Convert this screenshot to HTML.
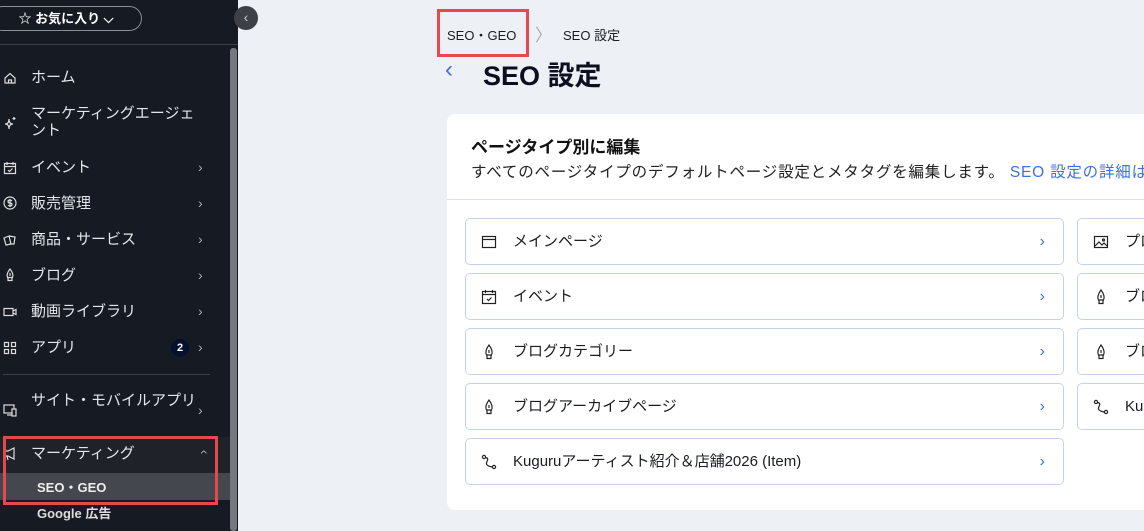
<!DOCTYPE html>
<html><head><meta charset="utf-8"><style>
*{box-sizing:border-box;margin:0;padding:0}
body{width:1144px;height:531px;overflow:hidden;background:#edf0f5;font-family:"Liberation Sans","Noto Sans CJK JP",sans-serif;position:relative}
.sb{position:absolute;left:0;top:0;width:238px;height:531px;background:#161a22;color:#e6e8ec}
.fav{position:absolute;left:-10px;top:6px;width:152px;height:25px;border:1px solid #8a8d93;border-radius:13px;color:#fff;font-size:13px;font-weight:bold;text-align:center;line-height:23px}
.hr{position:absolute;left:0;top:44px;width:238px;height:1px;background:#3c3f46}
.scroll{position:absolute;left:230px;top:48px;width:7px;height:483px;background:#75787e;border-radius:3px}
.it{position:absolute;left:31px;font-size:15px;color:#e4e6ea;line-height:17px;width:165px}
.ic{position:absolute;left:3px;width:14px;height:14px}
.ch{position:absolute;left:198px;font-size:14px;color:#aaa}
.card{position:absolute;left:447px;top:114px;width:720px;height:396px;background:#fff;border-radius:8px}
.row{position:absolute;height:47px;border:1px solid #c5d3ea;border-radius:5px;background:#fff;font-size:15px;color:#1a1c22;line-height:45px}
.row .t{position:absolute;left:47px}
.row .a{position:absolute;right:18px;color:#3b72e0;font-size:16px}
.row svg{position:absolute;left:15px;top:15px}
.red{position:absolute;border:3px solid #e5484d}
</style></head><body>
<div class="sb">
<div class="fav">☆ お気に入り ⌵</div>
<div class="hr"></div>
<div class="scroll"></div>
<svg class="ic" style="top:71px" viewBox="0 0 14 14" fill="none" stroke="#ddd" stroke-width="1.2"><path d="M2 7L7 2.5 12 7V12H2Z M5.5 12V9h3v3"/></svg>
<div class="it" style="top:69px">ホーム</div>
<svg class="ic" style="top:116px" viewBox="0 0 14 14" fill="none" stroke="#ddd" stroke-width="1.2"><path d="M6 3Q6 8 2 8Q6 8 6 13Q6 8 10 8Q6 8 6 3Z M11 1v3M9.5 2.5h3"/></svg>
<div class="it" style="top:105px;width:172px">マーケティングエージェント</div>
<svg class="ic" style="top:161px" viewBox="0 0 14 14" fill="none" stroke="#ddd" stroke-width="1.2"><rect x="1.5" y="2.5" width="11" height="10"/><path d="M1.5 5.5h11M4 1v3M10 1v3M5 9l1.5 1.5 3-3"/></svg>
<div class="it" style="top:159px">イベント</div><div class="ch" style="top:159px">›</div>
<svg class="ic" style="top:196px" viewBox="0 0 14 14" fill="none" stroke="#ddd" stroke-width="1.2"><circle cx="7" cy="7" r="6"/><path d="M9 5Q8 4 7 4Q5 4 5 5.5Q5 7 7 7Q9 7 9 8.5Q9 10 7 10Q6 10 5 9M7 3v8"/></svg>
<div class="it" style="top:195px">販売管理</div><div class="ch" style="top:195px">›</div>
<svg class="ic" style="top:233px" viewBox="0 0 14 14" fill="none" stroke="#ddd" stroke-width="1.2"><path d="M1 5l5-2 2 8-5 1Z M6 3l6 1-1 7-3 0"/></svg>
<div class="it" style="top:231px">商品・サービス</div><div class="ch" style="top:231px">›</div>
<svg class="ic" style="top:268px" viewBox="0 0 14 14" fill="none" stroke="#ddd" stroke-width="1.2"><path d="M7 1Q3 6 4.5 9.5H9.5Q11 6 7 1Z M5 9.5v3h4v-3M7 5v3"/></svg>
<div class="it" style="top:267px">ブログ</div><div class="ch" style="top:267px">›</div>
<svg class="ic" style="top:305px" viewBox="0 0 14 14" fill="none" stroke="#ddd" stroke-width="1.2"><rect x="1" y="3.5" width="9" height="7"/><path d="M10 6l3-1.5v5L10 8"/></svg>
<div class="it" style="top:303px">動画ライブラリ</div><div class="ch" style="top:303px">›</div>
<svg class="ic" style="top:341px" viewBox="0 0 14 14" fill="none" stroke="#ddd" stroke-width="1.2"><rect x="1.5" y="1.5" width="4" height="4"/><rect x="1.5" y="8.5" width="4" height="4"/><rect x="8.5" y="8.5" width="4" height="4"/><rect x="8.5" y="1.5" width="4" height="4"/></svg>
<div class="it" style="top:339px">アプリ</div>
<div style="position:absolute;left:171px;top:339px;width:18px;height:18px;border-radius:9px;background:#05112e;color:#fff;font-size:11px;font-weight:bold;text-align:center;line-height:18px">2</div>
<div class="ch" style="top:339px">›</div>
<div style="position:absolute;left:3px;top:374px;width:207px;height:1px;background:#3c3f46"></div>
<svg class="ic" style="top:403px" viewBox="0 0 14 14" fill="none" stroke="#ddd" stroke-width="1.2"><rect x="1" y="2" width="10" height="8"/><path d="M4 12h5"/><rect x="9" y="6" width="4" height="7" fill="#161a22"/></svg>
<div class="it" style="top:392px">サイト・モバイルアプリ</div><div class="ch" style="top:402px">›</div>
<div style="position:absolute;left:0;top:437px;width:230px;height:36px;background:#1f2229"></div>
<div style="position:absolute;left:0;top:473px;width:230px;height:27px;background:#44474e"></div>
<svg class="ic" style="top:447px" viewBox="0 0 14 14" fill="none" stroke="#ddd" stroke-width="1.2"><path d="M2 4h3l6-3v11L5 9H2Z M4 9l1 4"/></svg>
<div class="it" style="top:445px">マーケティング</div><div class="ch" style="top:444px;transform:rotate(-90deg);left:200px">›</div>
<div class="it" style="top:479px;left:37px;font-size:13px;font-weight:bold;color:#eee">SEO・GEO</div>
<div class="it" style="top:505px;left:37px;font-size:13px;font-weight:bold;color:#ddd">Google 広告</div>
<div class="red" style="left:3px;top:436px;width:215px;height:69px"></div>
</div>
<div style="position:absolute;left:234px;top:6px;width:24px;height:24px;border-radius:12px;background:#3d4047;color:#ccc;font-size:14px;text-align:center;line-height:22px">‹</div>
<div style="position:absolute;left:447px;top:25px;font-size:13px;color:#1a1c22">SEO・GEO</div>
<div style="position:absolute;left:535px;top:21px;font-size:17px;color:#aaa">〉</div>
<div style="position:absolute;left:563px;top:25px;font-size:13px;color:#1a1c22">SEO 設定</div>
<div class="red" style="left:437px;top:9px;width:92px;height:48px"></div>
<div style="position:absolute;left:445px;top:56px;font-size:24px;color:#3b72e0">‹</div>
<div style="position:absolute;left:483px;top:54px;font-size:27px;font-weight:bold;color:#0b0f1f">SEO 設定</div>
<div class="card">
<div style="position:absolute;left:24px;top:19px;font-size:17px;font-weight:bold;color:#111">ページタイプ別に編集</div>
<div style="position:absolute;left:24px;top:46px;font-size:15.5px;letter-spacing:0.8px;color:#222;white-space:nowrap">すべてのページタイプのデフォルトページ設定とメタタグを編集します。 <span style="color:#3b72e0">SEO 設定の詳細はこちら</span></div>
<div style="position:absolute;left:0;top:85px;width:720px;height:1px;background:#dfe2e8"></div>
</div>
<div class="row" style="left:465px;top:218px;width:599px"><svg width="16" height="16" viewBox="0 0 16 16" fill="none" stroke="#222" stroke-width="1.2"><rect x="1.5" y="2.5" width="13" height="11"/><path d="M1.5 5.5h13"/></svg><span class="t">メインページ</span><span class="a">›</span></div>
<div class="row" style="left:465px;top:273px;width:599px"><svg width="16" height="16" viewBox="0 0 16 16" fill="none" stroke="#222" stroke-width="1.2"><rect x="1.5" y="2.5" width="13" height="12"/><path d="M1.5 5.5h13M4.5 1v3M11.5 1v3M6 10l1.5 1.5 3-3"/></svg><span class="t">イベント</span><span class="a">›</span></div>
<div class="row" style="left:465px;top:328px;width:599px"><svg width="16" height="16" viewBox="0 0 16 16" fill="none" stroke="#222" stroke-width="1.2"><path d="M8 1Q3.5 7 5.5 11H10.5Q12.5 7 8 1Z M6 11v3.5h4V11M8 6v3"/></svg><span class="t">ブログカテゴリー</span><span class="a">›</span></div>
<div class="row" style="left:465px;top:383px;width:599px"><svg width="16" height="16" viewBox="0 0 16 16" fill="none" stroke="#222" stroke-width="1.2"><path d="M8 1Q3.5 7 5.5 11H10.5Q12.5 7 8 1Z M6 11v3.5h4V11M8 6v3"/></svg><span class="t">ブログアーカイブページ</span><span class="a">›</span></div>
<div class="row" style="left:465px;top:438px;width:599px"><svg width="16" height="16" viewBox="0 0 16 16" fill="none" stroke="#222" stroke-width="1.2"><circle cx="3" cy="3" r="1.6"/><circle cx="13" cy="13" r="1.6"/><path d="M4.5 3.5Q8 4 6 7.5Q4 11 9 12.5L11.5 13"/></svg><span class="t">Kuguruアーティスト紹介＆店舗2026 (Item)</span><span class="a">›</span></div>
<div class="row" style="left:1077px;top:218px;width:120px"><svg width="16" height="16" viewBox="0 0 16 16" fill="none" stroke="#222" stroke-width="1.2"><rect x="1.5" y="2.5" width="13" height="11"/><path d="M2 12l4-4 3 3 2-2 3 3"/><circle cx="10.5" cy="6" r="1"/></svg><span class="t">プロ</span></div>
<div class="row" style="left:1077px;top:273px;width:120px"><svg width="16" height="16" viewBox="0 0 16 16" fill="none" stroke="#222" stroke-width="1.2"><path d="M8 1Q3.5 7 5.5 11H10.5Q12.5 7 8 1Z M6 11v3.5h4V11M8 6v3"/></svg><span class="t">ブロ</span></div>
<div class="row" style="left:1077px;top:328px;width:120px"><svg width="16" height="16" viewBox="0 0 16 16" fill="none" stroke="#222" stroke-width="1.2"><path d="M8 1Q3.5 7 5.5 11H10.5Q12.5 7 8 1Z M6 11v3.5h4V11M8 6v3"/></svg><span class="t">ブロ</span></div>
<div class="row" style="left:1077px;top:383px;width:120px"><svg width="16" height="16" viewBox="0 0 16 16" fill="none" stroke="#222" stroke-width="1.2"><circle cx="3" cy="3" r="1.6"/><circle cx="13" cy="13" r="1.6"/><path d="M4.5 3.5Q8 4 6 7.5Q4 11 9 12.5L11.5 13"/></svg><span class="t">Kuguru</span></div>
</body></html>
